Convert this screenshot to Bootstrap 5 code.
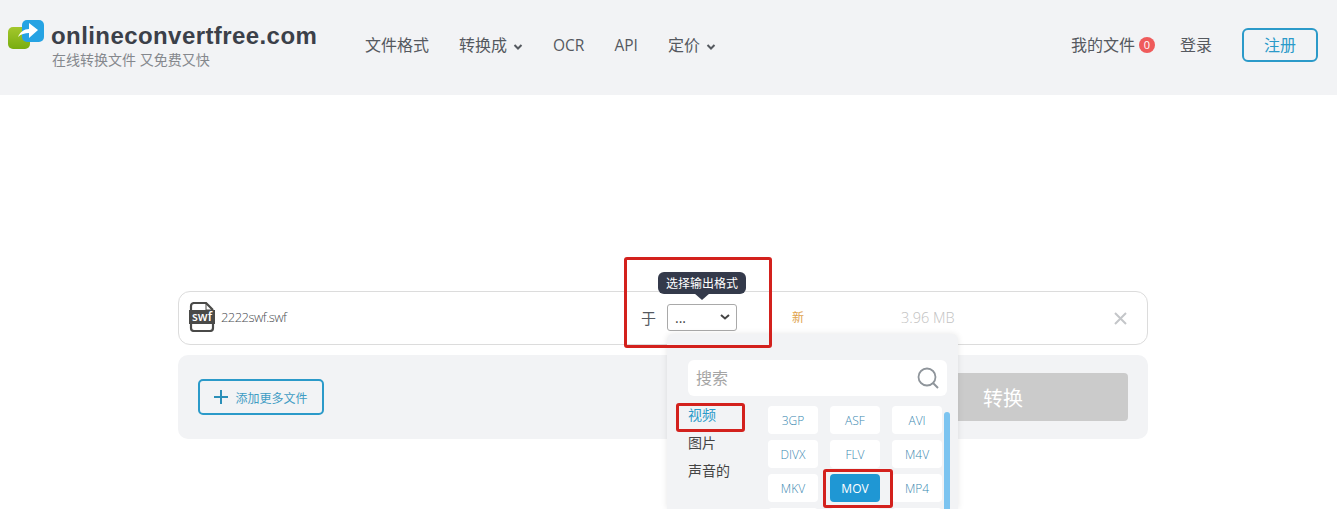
<!DOCTYPE html>
<html lang="zh-CN">
<head>
  <meta charset="UTF-8" />
  <meta name="viewport" content="width=device-width, initial-scale=1.0" />
  <title>onlineconvertfree.com</title>
  <link href="https://cdn.jsdelivr.net/npm/bootstrap@5.3.3/dist/css/bootstrap.min.css" rel="stylesheet">
  <style>
    html, body { height: 509px; overflow: hidden; }
    body {
      background: #fff;
      color: #4a4f57;
      font-family: "Open Sans", "Noto Sans CJK SC", sans-serif;
      font-size: 16px;
    }
    .site-head { height: 95px; background: #f2f3f5; padding: 0 19px 5px 8px; }
    .logo-mark { width: 36px; height: 29px; flex: none; margin-bottom: 21px; }
    .logo-box { margin-left: 7px; width: 314px; flex: none; }
    .logo-name { font: 700 24px/28px "Liberation Sans", sans-serif; color: #3b4049; letter-spacing: .42px; }
    .logo-sub { font-size: 14px; line-height: 19px; color: #85888d; margin-left: 1px; }
    .head-nav { gap: 30px; color: #55595f; line-height: 22px; }
    .head-nav span { white-space: nowrap; }
    .nav-latin { font-size: 15.5px; }
    .chev { width: 10px; height: 6px; margin-left: 6px; vertical-align: 1px; }
    .head-right { color: #55595f; }
    .count-badge {
      width: 16px; height: 16px; margin: 0 25px 0 4px; border-radius: 50%;
      background: #ef5b5b; color: #fff; font-size: 11px; line-height: 16px; text-align: center;
    }
    .signup-btn {
      width: 76px; height: 34px; margin-left: 30px; padding: 0; font-size: 16px; line-height: 30px;
      color: #2b9ac9; border: 2px solid #2b9ac9; border-radius: 6px; background: transparent;
    }
    .work-area { width: 970px; margin: 196px 0 0 178px; position: relative; }
    .file-row { height: 54px; border: 1px solid #dcdcdc; border-radius: 12px; padding-left: 10px; }
    .file-ico { width: 26px; height: 30px; flex: none; margin-bottom: 3px; }
    .file-name { width: 420px; margin-left: 6px; font-size: 13px; font-weight: 300; color: #4a4d52; flex: none; letter-spacing: -.55px; }
    .to-word { width: 26px; flex: none; font-size: 15px; color: #55595f; }
    .format-pick {
      width: 70px; height: 27px; flex: none; border: 1px solid #a9a9a9; border-radius: 3px;
      padding: 0 6px 0 7px; font-size: 14px; color: #444; margin-bottom: 2px;
    }
    .new-tag { width: 109px; margin-left: 55px; flex: none; font-size: 12px; color: #e0a24c; }
    .size-text { width: 213px; flex: none; font-size: 14.500px; font-weight: 300; color: #c2c2c2; }
    .close-x { width: 13px; height: 13px; flex: none; }
    .action-row { height: 84px; margin-top: 10px; background: #f2f3f5; border-radius: 10px; padding: 0 20px; }
    .add-btn {
      width: 126px; height: 36px; padding: 0; border: 2px solid #2b9ac9; border-radius: 5px;
      background: transparent; color: #3f9cc4; font-size: 12px; gap: 7px;
    }
    .add-label { padding-top: 3px; }
    .go-btn, .go-btn:disabled {
      width: 250px; height: 48px; padding: 3px 0 0; border: 0; border-radius: 4px;
      background: #cbcbcb; color: #fff; font-size: 20px; opacity: 1;
    }
    .hint-tip {
      position: absolute; left: 480px; top: -19px; width: 88px; height: 22px; border-radius: 6px;
      background: #343a4b; color: #fff; font-size: 12px; line-height: 24px; text-align: center; z-index: 3;
    }
    .hint-tip::after {
      content: ""; position: absolute; left: 36px; top: 21px;
      border: 8px solid transparent; border-top: 7px solid #343a4b; border-bottom: 0;
    }
    .format-panel {
      position: absolute; left: 489px; top: 43px; width: 291px; height: 175px; z-index: 2; overflow: hidden;
      background: #f2f3f5; border-radius: 6px 6px 0 0; box-shadow: 0 0 6px rgba(0,0,0,.1);
      padding: 26px 11px 0 21px;
    }
    .search-box { height: 36px; background: #fff; border-radius: 6px; padding: 0 8px; color: #a5a5a5; }
    .search-ico { width: 22px; height: 22px; }
    .panel-body { margin-top: 10px; }
    .cat-list { width: 80px; flex: none; font-size: 14px; line-height: 28px; color: #444; margin-top: -5px; }
    .cat-on { color: #2b9ac9; }
    .fmt-grid { display: grid; grid-template-columns: repeat(3, 50px); gap: 6px 12px; grid-auto-rows: 28px; }
    .fmt-cell {
      background: #fff; border-radius: 4px; color: #3a88b0; font-size: 12px; font-weight: 300;
      line-height: 29px; text-align: center;
    }
    .fmt-on { background: #1f97d4; color: #fff; font-weight: 400; }
    .scroll-thumb { width: 6px; height: 130px; margin: 6px 0 0 2px; background: #7cc4f0; border-radius: 3px; flex: none; }
    .red-mark { position: absolute; border: 3px solid #d3211d; border-radius: 3px; z-index: 4; }
    .mark-a { left: 446px; top: -34px; width: 148px; height: 91px; }
    .mark-b { left: 498px; top: 112px; width: 69px; height: 29px; }
    .mark-c { left: 645px; top: 178px; width: 70px; height: 39px; }
  </style>
</head>
<body>

  <header class="site-head d-flex align-items-center">
    <svg class="logo-mark" viewBox="0 0 36 29" aria-hidden="true">
      <defs>
        <linearGradient id="gr" x1="0" y1="0" x2="0" y2="1"><stop offset="0" stop-color="#a4c72c"/><stop offset="1" stop-color="#78ad10"/></linearGradient>
      </defs>
      <rect x="0" y="7" width="22" height="22" rx="5" fill="url(#gr)"/>
      <rect x="14" y="0" width="22" height="22" rx="5" fill="#26a3e3"/>
      <path d="M10 17c2-5 6-8 11-8V3l9 7-9 8v-5c-4 0-8 1-11 4z" fill="#fff"/>
    </svg>
    <div class="logo-box">
      <div class="logo-name">onlineconvertfree.com</div>
      <div class="logo-sub">在线转换文件 又免费又快</div>
    </div>
    <nav class="head-nav d-flex align-items-center">
      <span>文件格式</span>
      <span>转换成<svg class="chev" viewBox="0 0 10 6"><path d="M1.500 1 5 4.500 8.500 1" fill="none" stroke="#55595f" stroke-width="2"/></svg></span>
      <span class="nav-latin">OCR</span>
      <span class="nav-latin">API</span>
      <span>定价<svg class="chev" viewBox="0 0 10 6"><path d="M1.500 1 5 4.500 8.500 1" fill="none" stroke="#55595f" stroke-width="2"/></svg></span>
    </nav>
    <div class="head-right d-flex align-items-center ms-auto">
      <span>我的文件</span>
      <span class="count-badge">0</span>
      <span>登录</span>
      <button type="button" class="btn signup-btn">注册</button>
    </div>
  </header>

  <main class="work-area">
    <div class="file-row d-flex align-items-center">
      <svg class="file-ico" viewBox="0 0 26 30" aria-hidden="true">
        <path d="M2 8V4a3 3 0 0 1 3-3h12l7 7M24 21v5a3 3 0 0 1-3 3H5a3 3 0 0 1-3-3v-5" fill="none" stroke="#4a4a48" stroke-width="2.200"/>
        <path d="M17 1v7h7" fill="none" stroke="#4a4a48" stroke-width="1"/>
        <rect x="0" y="8" width="26" height="14" fill="#4a4a48"/>
        <text x="13" y="19" text-anchor="middle" font-family="Open Sans, sans-serif" font-size="12" font-weight="600" fill="#fff">swf</text>
      </svg>
      <span class="file-name">2222swf.swf</span>
      <span class="to-word">于</span>
      <div class="format-pick d-flex align-items-center justify-content-between">
        <span>...</span>
        <svg width="10" height="6" viewBox="0 0 10 6"><path d="M1 1l4 3.500L9 1" fill="none" stroke="#444" stroke-width="2"/></svg>
      </div>
      <span class="new-tag">新</span>
      <span class="size-text">3.96 MB</span>
      <svg class="close-x" viewBox="0 0 13 13"><path d="M1 1l11 11M12 1 1 12" stroke="#c4c6c9" stroke-width="2"/></svg>
    </div>

    <div class="action-row d-flex align-items-center justify-content-between">
      <button type="button" class="btn add-btn d-flex align-items-center justify-content-center">
        <svg width="14" height="14" viewBox="0 0 14 14"><path d="M7 0v14M0 7h14" stroke="#2b8fb8" stroke-width="2"/></svg>
        <span class="add-label">添加更多文件</span>
      </button>
      <button type="button" class="btn go-btn" disabled>转换</button>
    </div>

    <div class="hint-tip">选择输出格式</div>

    <div class="format-panel">
      <div class="search-box d-flex align-items-center justify-content-between">
        <span>搜索</span>
        <svg class="search-ico" viewBox="0 0 22 22"><circle cx="10" cy="10" r="8.500" fill="none" stroke="#8f959b" stroke-width="1.800"/><path d="M16 16l5 5" stroke="#8f959b" stroke-width="2"/></svg>
      </div>
      <div class="panel-body d-flex">
        <div class="cat-list">
          <div class="cat-on">视频</div>
          <div>图片</div>
          <div>声音的</div>
        </div>
        <div class="fmt-grid">
          <div class="fmt-cell">3GP</div>
          <div class="fmt-cell">ASF</div>
          <div class="fmt-cell">AVI</div>
          <div class="fmt-cell">DIVX</div>
          <div class="fmt-cell">FLV</div>
          <div class="fmt-cell">M4V</div>
          <div class="fmt-cell">MKV</div>
          <div class="fmt-cell fmt-on">MOV</div>
          <div class="fmt-cell">MP4</div>
          <div class="fmt-cell"></div>
          <div class="fmt-cell"></div>
          <div class="fmt-cell"></div>
        </div>
        <div class="scroll-thumb"></div>
      </div>
    </div>

    <div class="red-mark mark-a"></div>
    <div class="red-mark mark-b"></div>
    <div class="red-mark mark-c"></div>
  </main>

  <script src="https://cdn.jsdelivr.net/npm/bootstrap@5.3.3/dist/js/bootstrap.bundle.min.js"></script>
</body>
</html>
